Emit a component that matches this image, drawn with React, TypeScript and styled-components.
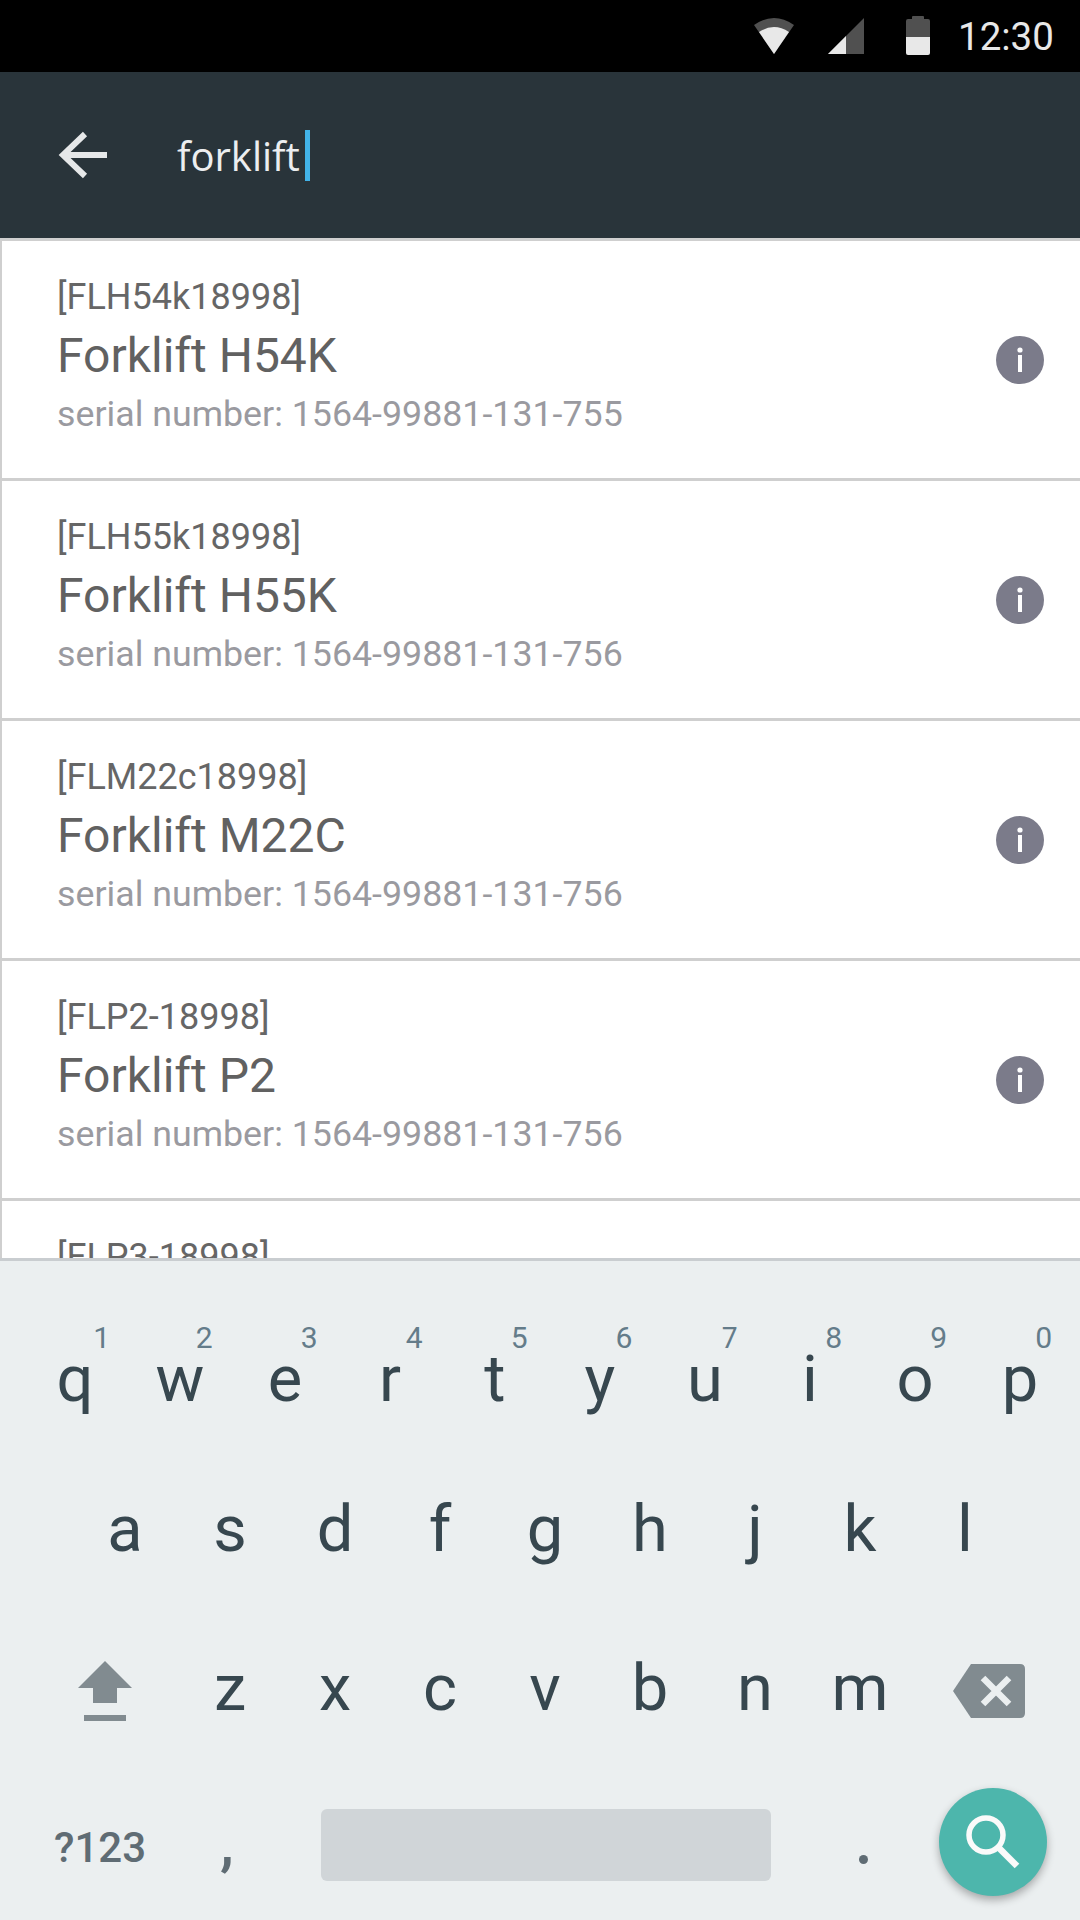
import styled, { createGlobalStyle } from 'styled-components';

const items = [
  { code: '[FLH54k18998]', name: 'Forklift H54K', serial: '1564-99881-131-755' },
  { code: '[FLH55k18998]', name: 'Forklift H55K', serial: '1564-99881-131-756' },
  { code: '[FLM22c18998]', name: 'Forklift M22C', serial: '1564-99881-131-756' },
  { code: '[FLP2-18998]', name: 'Forklift P2', serial: '1564-99881-131-756' },
  { code: '[FLP3-18998]', name: 'Forklift P3', serial: '1564-99881-131-756' },
];

const topRow = [
  ['q', '1'],
  ['w', '2'],
  ['e', '3'],
  ['r', '4'],
  ['t', '5'],
  ['y', '6'],
  ['u', '7'],
  ['i', '8'],
  ['o', '9'],
  ['p', '0'],
];

export default function App() {
  return (
    <Screen>
      <GlobalStyle />
      <StatusBar>
        <svg width="40" height="36" viewBox="0 0 40 36">
          <path d="M0 7 Q20 -7 40 7 L20 36 Z" fill="#505050" />
          <path d="M5 14 Q20 4 35 14 L20 36 Z" fill="#e8e8e8" />
        </svg>
        <SignalIcon width="36" height="36" viewBox="0 0 36 36">
          <path d="M36 0 V36 H0 Z" fill="#505050" />
          <path d="M18 18 V36 H0 Z" fill="#e8e8e8" />
        </SignalIcon>
        <BatteryIcon width="24" height="39" viewBox="0 0 24 39">
          <path d="M6 3 V1 Q6 0 7 0 H17 Q18 0 18 1 V3 H22 Q24 3 24 5 V21 H0 V5 Q0 3 2 3 Z" fill="#505050" />
          <path d="M0 21 H24 V37 Q24 39 22 39 H2 Q0 39 0 37 Z" fill="#e8e8e8" />
        </BatteryIcon>
        <Clock>12:30</Clock>
      </StatusBar>

      <SearchBar>
        <svg width="50" height="48" viewBox="0 0 50 48">
          <path d="M49 24 H6 M27 3 L5 24 L27 45" fill="none" stroke="#e6e8e9" strokeWidth="6" />
        </svg>
        <SearchText>forklift</SearchText>
        <Caret />
      </SearchBar>

      <ResultList>
        {items.map(item => (
          <ResultRow key={item.code}>
            <ResultText>
              <Code>{item.code}</Code>
              <Name>{item.name}</Name>
              <Serial>serial number: {item.serial}</Serial>
            </ResultText>
            <InfoBadge>
              <svg width="48" height="48" viewBox="0 0 48 48">
                <circle cx="24" cy="24" r="24" fill="#7b7b8a" />
                <circle cx="24" cy="14" r="2.6" fill="#fff" />
                <rect x="22" y="19" width="4" height="17" fill="#fff" />
              </svg>
            </InfoBadge>
          </ResultRow>
        ))}
      </ResultList>

      <Keyboard>
        <KeyRow $inset={22.5} $height={151}>
          {topRow.map(([letter, digit]) => (
            <Key key={letter}>
              {letter}
              <Hint>{digit}</Hint>
            </Key>
          ))}
        </KeyRow>
        <KeyRow $inset={72.5} $height={150}>
          {'asdfghjkl'.split('').map(letter => (
            <Key key={letter}>{letter}</Key>
          ))}
        </KeyRow>
        <KeyRow $inset={32.5} $height={168}>
          <IconKey $width={145}>
            <svg width="54" height="60" viewBox="0 0 54 60">
              <path d="M27 0 L54 27 H39 V42 H15 V27 H0 Z" fill="#818b90" />
              <rect x="6" y="54" width="42" height="6" fill="#818b90" />
            </svg>
          </IconKey>
          {'zxcvbnm'.split('').map(letter => (
            <Key key={letter}>{letter}</Key>
          ))}
          <IconKey $width={153}>
            <svg width="72" height="54" viewBox="0 0 72 54">
              <path
                d="M18 0 H67 Q72 0 72 5 V49 Q72 54 67 54 H18 L0 27 Z"
                fill="#818b90"
              />
              <path d="M30 14 L56 40 M56 14 L30 40" stroke="#ebeff0" strokeWidth="6.5" />
            </svg>
          </IconKey>
        </KeyRow>
        <BottomRow>
          <SymbolKey>?123</SymbolKey>
          <CommaKey>,</CommaKey>
          <SpaceBar />
          <PeriodKey>
            <Dot />
          </PeriodKey>
          <SearchFab>
            <svg width="54" height="54" viewBox="0 0 54 54">
              <circle cx="20" cy="20" r="17" fill="none" stroke="#fafafa" strokeWidth="5.5" />
              <path d="M32 32 L51 51" stroke="#fafafa" strokeWidth="6.5" />
            </svg>
          </SearchFab>
        </BottomRow>
      </Keyboard>
    </Screen>
  );
}

const GlobalStyle = createGlobalStyle`
  html, body {
    margin: 0;
    padding: 0;
    background: #fff;
  }
`;

const Screen = styled.div`
  width: 1080px;
  height: 1920px;
  display: flex;
  flex-direction: column;
  overflow: hidden;
  font-family: Roboto, 'Liberation Sans', sans-serif;
`;

const StatusBar = styled.div`
  height: 72px;
  flex: none;
  background: #000;
  display: flex;
  align-items: center;
  padding-left: 754px;
  box-sizing: border-box;
`;

const SignalIcon = styled.svg`
  margin-left: 34px;
`;

const BatteryIcon = styled.svg`
  margin-left: 42px;
  margin-top: -2px;
`;

const Clock = styled.span`
  margin-left: 28px;
  font-size: 38.5px;
  color: #e8e8e8;
`;

const SearchBar = styled.div`
  height: 166px;
  flex: none;
  background: #29343a;
  display: flex;
  align-items: center;
  padding-left: 58px;
  box-sizing: border-box;
`;

const SearchText = styled.span`
  margin-left: 69px;
  font-family: 'Open Sans', sans-serif;
  font-size: 40px;
  color: #eceef0;
`;

const Caret = styled.span`
  width: 5px;
  height: 51px;
  margin-left: 5px;
  background: #42b3e8;
`;

const ResultList = styled.div`
  flex: 1;
  min-height: 0;
  overflow: hidden;
  background: #fff;
`;

const ResultRow = styled.div`
  height: 240px;
  box-sizing: border-box;
  border-top: 3px solid #cfcfcf;
  border-left: 2px solid #cfcfcf;
  display: flex;
  align-items: center;
  justify-content: space-between;
  padding: 0 36px 0 55px;
`;

const ResultText = styled.div`
  display: flex;
  flex-direction: column;
  margin-bottom: 10px;
`;

const Code = styled.div`
  font-size: 36px;
  line-height: 58px;
  color: #666;
`;

const Name = styled.div`
  font-size: 48px;
  line-height: 60px;
  color: #616161;
`;

const Serial = styled.div`
  font-size: 35.75px;
  line-height: 56px;
  color: #9a9aa0;
`;

const InfoBadge = styled.div`
  display: flex;
`;

const Keyboard = styled.div`
  flex: none;
  height: 662px;
  box-sizing: border-box;
  background: #ebeff0;
  border-top: 3px solid #c9cdd0;
  padding-top: 42px;
  display: flex;
  flex-direction: column;
`;

const KeyRow = styled.div<{ $inset: number; $height: number }>`
  height: ${props => props.$height}px;
  flex: none;
  display: flex;
  align-items: center;
  padding-left: ${props => props.$inset}px;
`;

const Key = styled.div`
  position: relative;
  width: 105px;
  height: 150px;
  display: flex;
  align-items: center;
  justify-content: center;
  font-size: 65px;
  color: #37474f;
`;

const Hint = styled.span`
  position: absolute;
  top: 16px;
  right: 20px;
  font-size: 30px;
  line-height: 36px;
  font-variant-numeric: proportional-nums;
  color: #647c8a;
`;

const IconKey = styled.div<{ $width: number }>`
  width: ${props => props.$width}px;
  margin-top: 5px;
  display: flex;
  justify-content: center;
`;

const BottomRow = styled.div`
  height: 145px;
  flex: none;
  margin-top: 3px;
  display: flex;
  align-items: center;
  padding-left: 22px;
`;

const SymbolKey = styled.div`
  width: 156px;
  text-align: center;
  font-size: 42px;
  font-weight: 500;
  color: #5f6c74;
`;

const CommaKey = styled.div`
  width: 98px;
  margin-top: -10px;
  text-align: center;
  font-size: 62px;
  font-weight: 500;
  color: #5f6c74;
`;

const SpaceBar = styled.div`
  width: 450px;
  height: 72px;
  margin: -5px 45px 0;
  border-radius: 6px;
  background: #d0d5d8;
`;

const PeriodKey = styled.div`
  width: 94px;
  display: flex;
  justify-content: center;
`;

const Dot = styled.span`
  width: 9px;
  height: 9px;
  margin-top: 24px;
  border-radius: 50%;
  background: #5f6c74;
`;

const SearchFab = styled.div`
  width: 108px;
  height: 108px;
  margin: -12px 0 0 29px;
  border-radius: 50%;
  background: #4db6ac;
  box-shadow: 0 4px 8px rgba(0, 0, 0, 0.3);
  display: flex;
  align-items: center;
  justify-content: center;
`;
